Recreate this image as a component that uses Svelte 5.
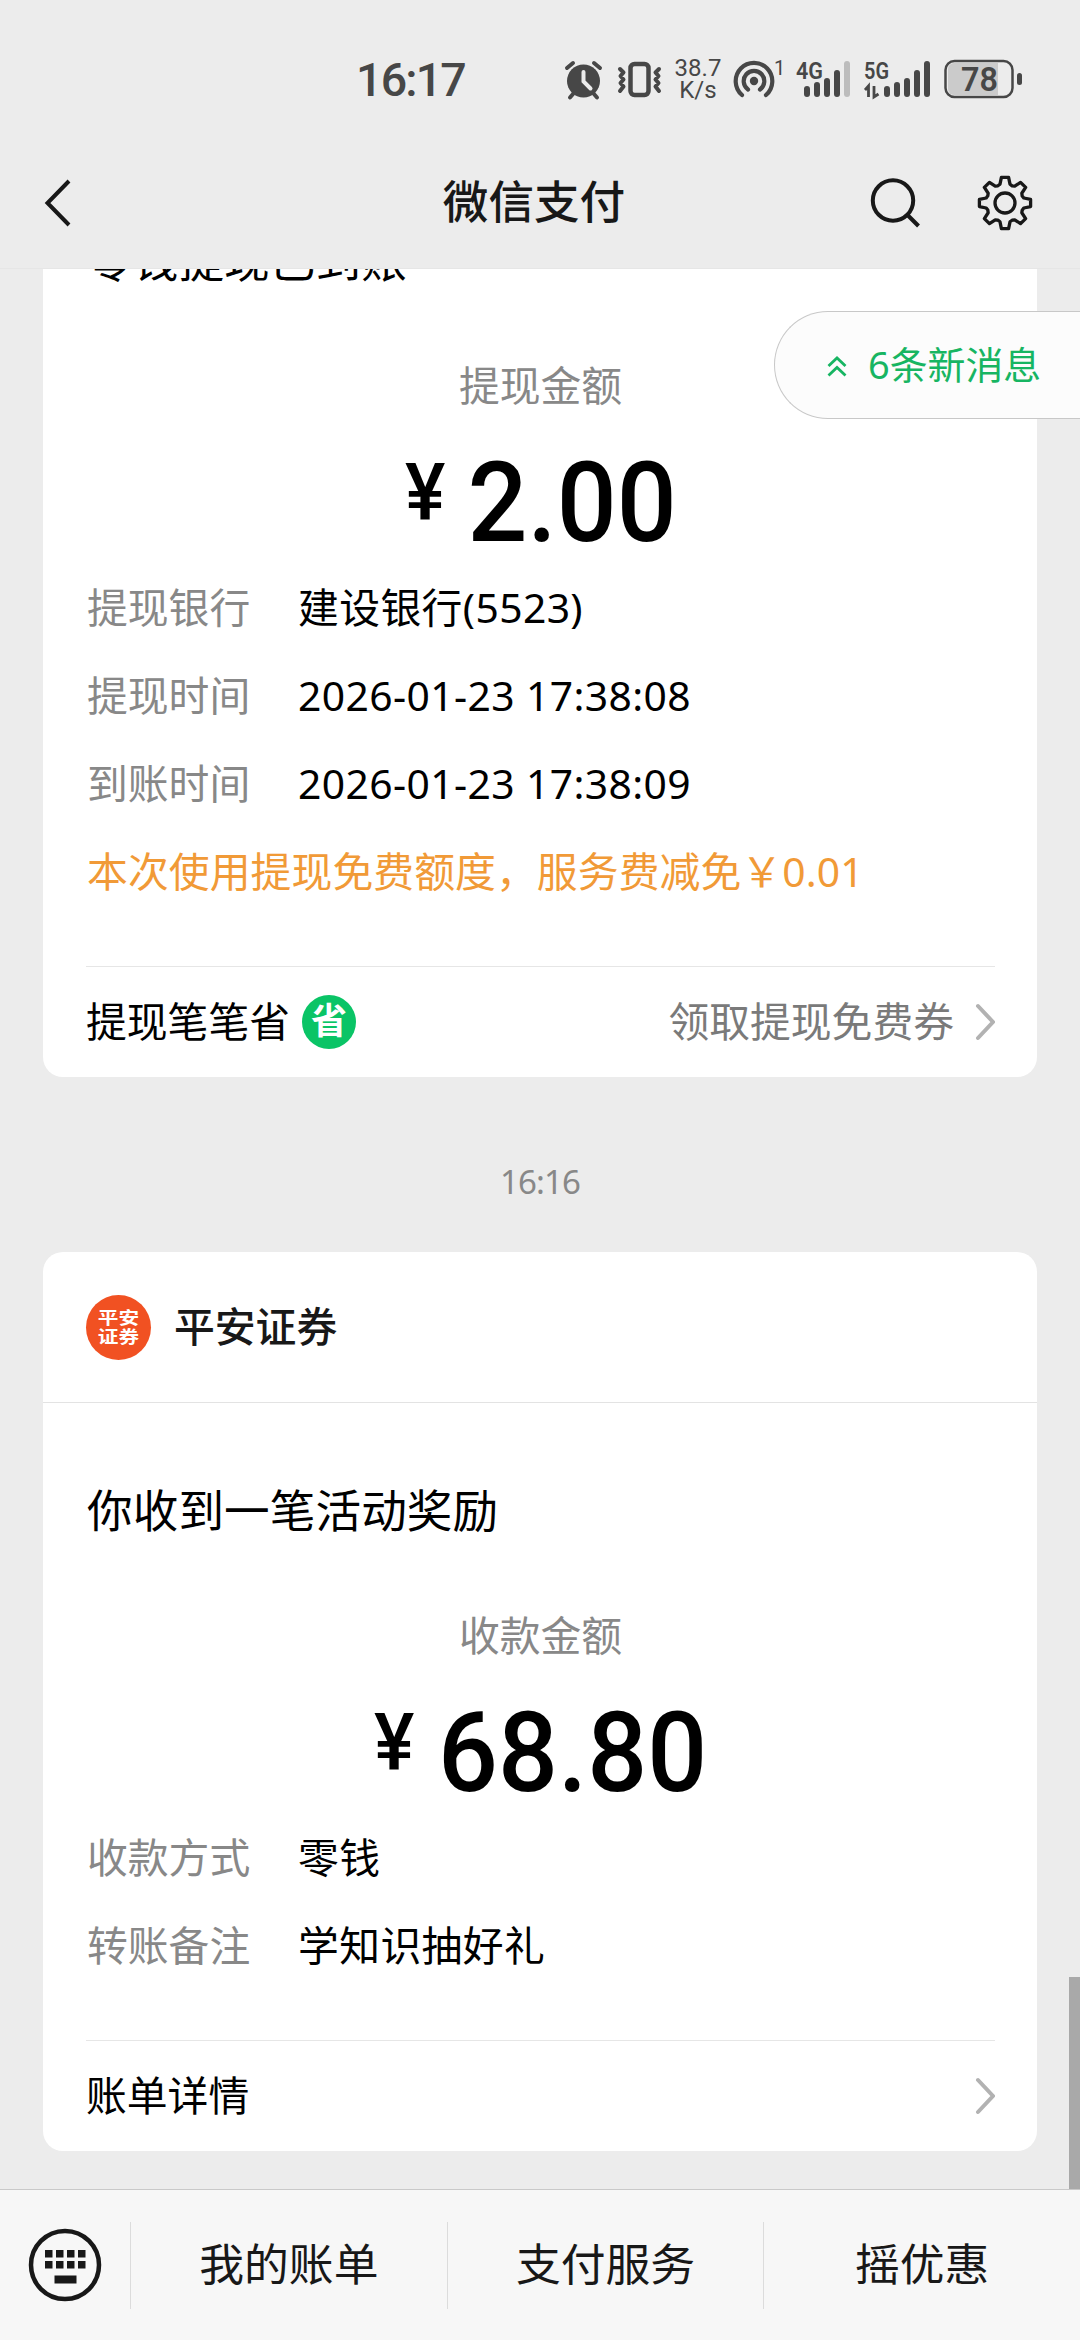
<script>
  const withdrawal = [
    { label: '提现银行', value: '建设银行(5523)' },
    { label: '提现时间', value: '2026-01-23 17:38:08' },
    { label: '到账时间', value: '2026-01-23 17:38:09' }
  ];
  const receipt = [
    { label: '收款方式', value: '零钱' },
    { label: '转账备注', value: '学知识抽好礼' }
  ];
  const menu = ['我的账单', '支付服务', '摇优惠'];

  // Outline of an eight-toothed gear centred on the origin
  const tooth = [[-7.1, -17.2], [-5, -18.8], [-3.6, -25.6], [3.6, -25.6], [5, -18.8]];
  const gear =
    'M' +
    Array.from({ length: 8 }, (_, i) => {
      const a = (i * Math.PI) / 4;
      return tooth
        .map(([x, y]) => {
          const px = x * Math.cos(a) - y * Math.sin(a);
          const py = x * Math.sin(a) + y * Math.cos(a);
          return `${px.toFixed(2)} ${py.toFixed(2)}`;
        })
        .join('L');
    }).join('L') +
    'Z';
  const keys = [0, 1, 2, 3];
</script>

{#snippet chevron()}
  <svg class="chevron" width="20" height="38" viewBox="0 0 20 38"><path d="M3 3 18 19 3 35" /></svg>
{/snippet}

{#snippet amount(title, value)}
  <div class="amount-label">{title}</div>
  <div class="amount"><span class="yen">¥</span><span class="figure">{value}</span></div>
{/snippet}

{#snippet details(rows)}
  {#each rows as row}
    <div class="row"><span class="key">{row.label}</span><span>{row.value}</span></div>
  {/each}
{/snippet}

<div class="phone">
  <div class="status">
    <span class="clock">16:17</span>
    <svg class="alarm" width="40" height="44" viewBox="0 0 40 44">
      <circle cx="19.5" cy="24" r="16.5" fill="#474747" />
      <path d="M3 11 9 6M36 11 30 6M9 37 6 40.500M30 37 33 40.500" stroke="#474747" stroke-width="4" stroke-linecap="round" />
      <path d="M19.500 15V24.500L26.500 31.500" fill="none" stroke="#ececec" stroke-width="4" stroke-linecap="round" />
    </svg>
    <svg class="vibrate" width="46" height="44" viewBox="0 0 46 44" fill="none" stroke="#474747">
      <rect x="14.500" y="7" width="18" height="31" rx="4" stroke-width="4.500" />
      <path d="M4 12 7.500 15.500 4.500 19 7.500 22.500 4.500 26 7.500 29.500 4 34M43 12 39.500 15.500 42.500 19 39.500 22.500 42.500 26 39.500 29.500 43 34" stroke-width="4" stroke-linejoin="round" stroke-linecap="round" />
    </svg>
    <div class="speed"><span>38.7</span><span>K/s</span></div>
    <svg class="hotspot" width="54" height="44" viewBox="0 0 54 44">
      <circle cx="22" cy="24" r="4.200" fill="#474747" />
      <g fill="none" stroke="#474747" stroke-width="4.200" stroke-linecap="round">
        <path d="M16 32.500A10.300 10.300 0 1 1 28 32.500" />
        <path d="M10 38A18.300 18.300 0 1 1 34 38" />
      </g>
      <text x="42" y="18" font-size="20">1</text>
    </svg>
    <svg class="signal" width="56" height="44" viewBox="0 0 56 44">
      <text x="1" y="22" font-size="24" font-weight="600" textLength="27" lengthAdjust="spacingAndGlyphs">4G</text>
      <g stroke="#474747" stroke-width="6" stroke-linecap="round">
        <path d="M12 32V37M22 28V37M32 24V37M42 16V37" />
        <path d="M52 7V37" stroke="#bcbcbc" />
      </g>
    </svg>
    <svg class="signal" width="68" height="44" viewBox="0 0 68 44">
      <text x="1" y="22" font-size="24" font-weight="600" textLength="25" lengthAdjust="spacingAndGlyphs">5G</text>
      <path d="M2 33 5.500 29V40M15.500 37 11 40V29" fill="none" stroke="#474747" stroke-width="2.800" />
      <g stroke="#474747" stroke-width="6" stroke-linecap="round">
        <path d="M24 32V37M34 28V37M44 24V37M54 16V37M64 7V37" />
      </g>
    </svg>
    <svg width="80" height="44" viewBox="0 0 80 44">
      <path d="M11 6H55V38H11A6 6 0 0 1 5 32V12A6 6 0 0 1 11 6Z" fill="#cbcbcb" />
      <rect x="2.500" y="4" width="67" height="36" rx="9" fill="none" stroke="#474747" stroke-width="2.500" />
      <rect x="74" y="16" width="5" height="12" rx="2.500" fill="#474747" />
      <text x="18" y="34" font-size="33.500" font-weight="600" textLength="37" lengthAdjust="spacingAndGlyphs">78</text>
    </svg>
  </div>

  <header>
    <svg width="28" height="50" viewBox="0 0 28 50"><path d="M25 3 3.500 25 25 47" /></svg>
    <h1>微信支付</h1>
    <div class="tools">
      <svg width="54" height="58" viewBox="0 0 54 58">
        <circle cx="25" cy="26.500" r="20.200" /><path d="M39.500 41 50.500 52" />
      </svg>
      <svg width="58" height="58" viewBox="-29 -29 58 58">
        <path class="thin" d={gear} /><circle class="thin" r="10" />
      </svg>
    </div>
  </header>

  <main>
    <section class="card">
      <div class="body">
        <h2>零钱提现已到账</h2>
        {@render amount('提现金额', '2.00')}
        {@render details(withdrawal)}
        <div class="row notice">本次使用提现免费额度，服务费减免￥0.01</div>
      </div>
      <div class="foot">
        <span class="text">提现笔笔省</span><span class="save">省</span>
        <span class="text more">领取提现免费券</span>
        {@render chevron()}
      </div>
    </section>

    <time>16:16</time>

    <section class="card">
      <div class="brand">
        <div class="logo"><span>平安</span><span>证券</span></div>
        <strong>平安证券</strong>
      </div>
      <div class="body">
        <h2>你收到一笔活动奖励</h2>
        {@render amount('收款金额', '68.80')}
        {@render details(receipt)}
      </div>
      <div class="foot">
        <span class="text grow">账单详情</span>
        {@render chevron()}
      </div>
    </section>

    <div class="new-messages">
      <svg width="20" height="22" viewBox="0 0 20 22"><path d="M1.500 10 10 2 18.500 10M1.500 19.500 10 11.500 18.500 19.500" /></svg>
      <span>6条新消息</span>
    </div>
    <div class="scrollbar"></div>
  </main>

  <nav>
    <div class="keyboard">
      <svg width="76" height="76" viewBox="0 0 76 76">
        <circle cx="38" cy="38" r="34" fill="none" stroke="#181818" stroke-width="4.500" />
        {#each keys as k}
          <rect x={18 + k * 11} y="23" width="7.500" height="7.500" />
          <rect x={18 + k * 11} y="34" width="7.500" height="7.500" />
        {/each}
        <rect x="27.500" y="48.500" width="22" height="8" />
      </svg>
    </div>
    {#each menu as item}
      <div class="item">{item}</div>
    {/each}
  </nav>
</div>

<style>
  :global(body) {
    background: #ededed;
  }
  .phone {
    width: 1080px;
    height: 2340px;
    display: flex;
    flex-direction: column;
    overflow: hidden;
    background: #ececec;
    color: #000;
    font-family: 'Noto Sans', 'Noto Sans CJK SC', sans-serif;
    font-size: 40.8px;
  }
  h1, h2 {
    margin: 0;
  }
  .status {
    height: 158px;
    flex: none;
    box-sizing: border-box;
    padding-left: 356px;
    display: flex;
    align-items: center;
    gap: 12px;
    color: #474747;
    font-family: Roboto, sans-serif;
  }
  .status svg {
    flex: none;
  }
  .status text {
    fill: #474747;
  }
  .clock {
    width: 196px;
    font-size: 46.5px;
    font-weight: 500;
    letter-spacing: -1.8px;
    padding-top: 2px;
    box-sizing: border-box;
  }
  .speed {
    width: 48px;
    display: flex;
    flex-direction: column;
    align-items: center;
    font-size: 24px;
    line-height: 22px;
  }
  .hotspot {
    margin: 0 -3px 0 -2px;
  }
  header {
    height: 110px;
    flex: none;
    box-sizing: border-box;
    padding: 0 46px 20px 44px;
    display: grid;
    grid-template-columns: 1fr auto 1fr;
    align-items: center;
  }
  header svg {
    fill: none;
    stroke: #181818;
    stroke-width: 4;
  }
  header .thin {
    stroke-width: 3.3;
    stroke-linejoin: round;
  }
  h1 {
    margin-left: -10px;
    font-size: 45.6px;
    font-weight: 500;
    font-family: 'Noto Sans CJK SC', sans-serif;
    line-height: 60px;
    padding-bottom: 8px;
    color: #181818;
  }
  .tools {
    display: flex;
    justify-content: flex-end;
    gap: 54px;
  }
  main {
    position: relative;
    flex: 1;
    min-height: 0;
    box-sizing: border-box;
    padding: 0 43px 38px;
    display: flex;
    flex-direction: column;
    justify-content: flex-end;
    overflow: hidden;
    border-top: 1px solid #e6e6e6;
  }
  .card {
    flex: none;
    background: #fff;
    border-radius: 20px;
  }
  .brand {
    height: 150px;
    padding-left: 43px;
    display: flex;
    align-items: center;
    gap: 23px;
    border-bottom: 1px solid #e3e3e3;
    color: #181818;
  }
  .brand strong {
    font-weight: 500;
    font-family: 'Noto Sans CJK SC', sans-serif;
    line-height: 60px;
    padding-bottom: 4px;
  }
  .logo {
    width: 65px;
    height: 65px;
    border-radius: 50%;
    background: #f15122;
    color: #fff;
    font: 700 17.5px/19px 'Noto Sans CJK SC', sans-serif;
    display: flex;
    flex-direction: column;
    align-items: center;
    justify-content: center;
    padding-bottom: 2px;
    box-sizing: border-box;
  }
  .logo span {
    transform: scaleX(1.18);
  }
  .body {
    padding: 79px 43px 49px 44px;
  }
  h2 {
    font-size: 45.6px;
    font-weight: 400;
    line-height: 57px;
    padding-bottom: 3px;
    letter-spacing: 0.1px;
  }
  .amount-label {
    margin-top: 70px;
    line-height: 47px;
    padding-bottom: 3px;
    text-align: center;
    color: #888;
  }
  .amount {
    margin: 35px 0 8px;
    height: 110px;
    display: flex;
    justify-content: center;
    gap: 20px;
    font: 500 111px/112px Roboto, sans-serif;
  }
  .figure {
    transform: scaleX(0.95);
  }
  .yen {
    width: 44px;
    margin: 0 -7px 0 7px;
    font-size: 80px;
    line-height: 93px;
    transform: scaleX(0.95);
    transform-origin: left;
  }
  .row {
    height: 88px;
    line-height: 85px;
    display: flex;
    white-space: nowrap;
    letter-spacing: 0.4px;
  }
  .key {
    width: 211px;
    color: #888;
    letter-spacing: 0;
  }
  .notice {
    color: #f19a37;
    letter-spacing: 0.1px;
  }
  .foot {
    height: 111px;
    box-sizing: border-box;
    margin: 0 42px 0 43px;
    border-top: 1px solid #e6e6e6;
    display: flex;
    align-items: center;
  }
  .text {
    padding-bottom: 5px;
  }
  .save {
    width: 54px;
    height: 54px;
    margin-left: 12px;
    border-radius: 50%;
    background: #0ac466;
    color: #fff;
    font-size: 36px;
    font-weight: 700;
    line-height: 52px;
    text-align: center;
  }
  .more {
    flex: 1;
    text-align: right;
    color: #7a7a7a;
  }
  .grow {
    flex: 1;
  }
  .chevron {
    margin-left: 21px;
    fill: none;
    stroke: #b2b2b2;
    stroke-width: 4;
    stroke-linecap: round;
  }
  time {
    height: 175px;
    flex: none;
    line-height: 210px;
    text-align: center;
    font-size: 33px;
    letter-spacing: -0.9px;
    color: #888;
  }
  .new-messages {
    position: absolute;
    top: 42px;
    right: 0;
    width: 306px;
    height: 108px;
    box-sizing: border-box;
    padding-left: 52px;
    display: flex;
    align-items: center;
    gap: 21px;
    border: 1px solid #c8c8c8;
    border-right: 0;
    border-radius: 54px 0 0 54px;
    background: #fcfcfc;
    color: #17b562;
    font-size: 37.9px;
    white-space: nowrap;
  }
  .new-messages span {
    padding-bottom: 6px;
  }
  .new-messages svg {
    margin-top: 3px;
    fill: none;
    stroke: #17b562;
    stroke-width: 2.8;
  }
  .scrollbar {
    position: absolute;
    right: 0;
    bottom: 0;
    width: 11px;
    height: 212px;
    background: #a9a9a9;
  }
  nav {
    height: 151px;
    flex: none;
    box-sizing: border-box;
    border-top: 1px solid #c9c9c9;
    background: #f7f7f7;
    display: flex;
    align-items: center;
    color: #181818;
    font-size: 44.8px;
  }
  .keyboard {
    width: 130px;
    display: flex;
    justify-content: center;
    fill: #181818;
  }
  .item {
    flex: 1;
    height: 87px;
    line-height: 83px;
    text-align: center;
    border-left: 1px solid #dcdcdc;
  }
</style>
